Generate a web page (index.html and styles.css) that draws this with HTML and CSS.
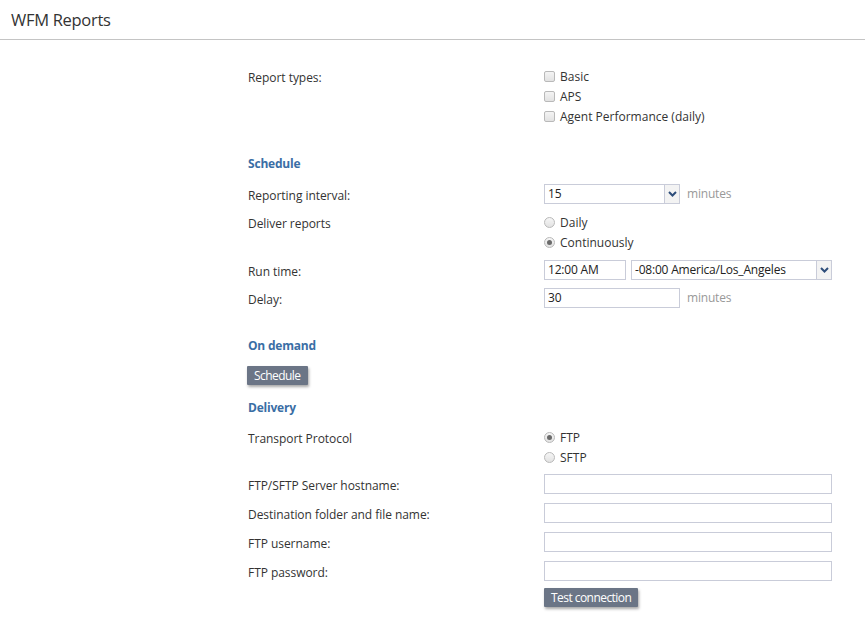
FILE: index.html
```html
<!DOCTYPE html>
<html>
<head>
<meta charset="utf-8">
<link rel="stylesheet" href="styles.css">
</head>
<body>
<header class="topbar"><h1 class="title">WFM Reports</h1></header>
<main class="form">
  <div class="row row-types">
    <div class="label">Report types:</div>
    <div class="control stack">
      <label class="opt"><span class="cb"></span>Basic</label>
      <label class="opt"><span class="cb"></span>APS</label>
      <label class="opt"><span class="cb"></span>Agent Performance (daily)</label>
    </div>
  </div>

  <h2 class="section s-schedule">Schedule</h2>

  <div class="row field row-interval">
    <div class="label">Reporting interval:</div>
    <div class="control inline">
      <div class="select sel-interval"><span class="val">15</span><span class="arrow"><svg width="9" height="6" viewBox="0 0 9 6"><path d="M1 1 L4.5 4.5 L8 1" fill="none" stroke="#2d4d7a" stroke-width="2"/></svg></span></div>
      <span class="unit">minutes</span>
    </div>
  </div>

  <div class="row row-deliver">
    <div class="label">Deliver reports</div>
    <div class="control stack">
      <label class="opt"><span class="rd"></span>Daily</label>
      <label class="opt"><span class="rd on"></span>Continuously</label>
    </div>
  </div>

  <div class="row field row-run">
    <div class="label">Run time:</div>
    <div class="control inline">
      <div class="input in-time">12:00 AM</div>
      <div class="select sel-tz"><span class="val">-08:00 America/Los_Angeles</span><span class="arrow"><svg width="9" height="6" viewBox="0 0 9 6"><path d="M1 1 L4.5 4.5 L8 1" fill="none" stroke="#2d4d7a" stroke-width="2"/></svg></span></div>
    </div>
  </div>

  <div class="row field row-delay">
    <div class="label">Delay:</div>
    <div class="control inline">
      <div class="input in-delay">30</div>
      <span class="unit">minutes</span>
    </div>
  </div>

  <h2 class="section s-demand">On demand</h2>
  <div class="btn-row"><button class="btn">Schedule</button></div>

  <h2 class="section s-delivery">Delivery</h2>

  <div class="row row-transport">
    <div class="label">Transport Protocol</div>
    <div class="control stack">
      <label class="opt"><span class="rd on"></span>FTP</label>
      <label class="opt"><span class="rd"></span>SFTP</label>
    </div>
  </div>

  <div class="row field row-host">
    <div class="label">FTP/SFTP Server hostname:</div>
    <div class="control"><div class="input wide"></div></div>
  </div>
  <div class="row field row-next">
    <div class="label">Destination folder and file name:</div>
    <div class="control"><div class="input wide"></div></div>
  </div>
  <div class="row field row-next">
    <div class="label">FTP username:</div>
    <div class="control"><div class="input wide"></div></div>
  </div>
  <div class="row field row-next">
    <div class="label">FTP password:</div>
    <div class="control"><div class="input wide"></div></div>
  </div>
  <div class="row row-test">
    <div class="label"></div>
    <div class="control"><button class="btn">Test connection</button></div>
  </div>
</main>
</body>
</html>
```
FILE: styles.css
```css
* { box-sizing: border-box; }
html, body { margin: 0; padding: 0; background: #fff; }
body {
  font-family: "Open Sans", "Noto Sans", sans-serif;
  font-size: 12px;
  color: #333;
  width: 865px;
  height: 623px;
  overflow: hidden;
}
.topbar {
  height: 40px;
  border-bottom: 1px solid #c4c4c4;
  padding-left: 11px;
  display: flex;
  align-items: center;
}
.title {
  margin: 0;
  font-size: 16.5px;
  font-weight: 400;
  color: #333;
  letter-spacing: -0.3px;
}
.form {
  padding-left: 248px;
  width: 832px;
}
.row {
  display: grid;
  grid-template-columns: 296px 1fr;
}
.label { line-height: 20px; letter-spacing: -0.05px; }
.row-types .label, .row-deliver .label, .row-transport .label { position: relative; top: 2px; }
.field { align-items: center; height: 20px; }
.field .label { position: relative; top: 1.5px; }
.control { min-width: 0; }
.stack { display: flex; flex-direction: column; }
.inline { display: flex; align-items: center; }
.opt {
  display: flex;
  align-items: center;
  height: 20px;
  letter-spacing: 0;
}
.cb {
  width: 11px; height: 11px;
  border: 1px solid #b9b9b9;
  border-radius: 2px;
  background: linear-gradient(#f4f4f4, #e2e2e2);
  margin-right: 5px;
}
.rd {
  width: 11px; height: 11px;
  border: 1px solid #b9b9b9;
  border-radius: 50%;
  background: linear-gradient(#f6f6f6, #e2e2e2);
  margin-right: 5px;
  display: flex; align-items: center; justify-content: center;
}
.rd.on::after {
  content: "";
  width: 5px; height: 5px; border-radius: 50%;
  background: #6a6a6a;
}
.row-types { margin-top: 26px; }
.section {
  margin: 0;
  font-size: 12px;
  font-weight: 700;
  color: #3a6ea5;
  line-height: 20px;
  letter-spacing: -0.2px;
  position: relative;
  top: 1px;
}
.s-schedule { margin-top: 27px; }
.row-interval { margin-top: 11px; }
.input, .select {
  height: 20px;
  border: 1px solid #c9ccd9;
  background: #fff;
  line-height: 18px;
  padding-left: 3px;
  color: #222;
  letter-spacing: -0.2px;
}
.select { display: flex; align-items: stretch; padding-right: 0; }
.select .val { flex: 1; }
.arrow {
  width: 15px;
  border-left: 1px solid #c9ccd9;
  background: #f3f3f3;
  display: flex; align-items: center; justify-content: center;
}
.sel-interval { width: 136px; }
.unit { color: #999; margin-left: 7px; letter-spacing: -0.2px; position: relative; top: -1px; }
.row-deliver { margin-top: 8px; }
.row-run { margin-top: 8px; }
.in-time { width: 82px; }
.sel-tz { width: 201px; margin-left: 5px; }
.row-delay { margin-top: 8px; }
.in-delay { width: 136px; }
.s-demand { margin-top: 27px; }
.btn-row { margin-top: 11px; margin-left: -1px; }
.btn {
  font-family: inherit;
  font-size: 12px;
  color: #fff;
  background: #6b7586;
  border: none;
  border-radius: 1px;
  height: 19px;
  padding: 0 7px;
  line-height: 19px;
  letter-spacing: -0.55px;
  box-shadow: 1px 2px 3px rgba(0,0,0,0.35);
  cursor: default;
}
.s-delivery { margin-top: 12px; }
.row-transport { margin-top: 10px; }
.row-host { margin-top: 7px; }
.row-next { margin-top: 9px; }
.wide { width: 288px; }
.row-test { margin-top: 7px; }
```
